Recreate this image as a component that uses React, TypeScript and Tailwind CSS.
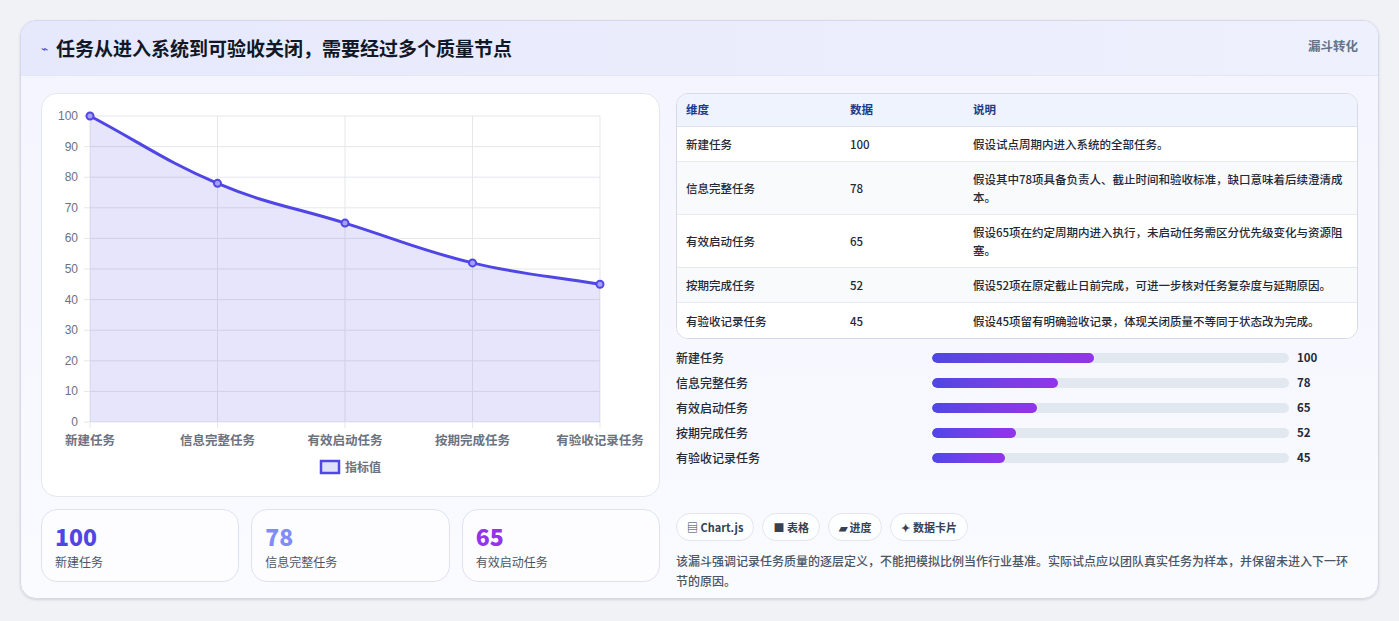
const data = [
  { name: "新建任务", v: 100, desc: "假设试点周期内进入系统的全部任务。" },
  { name: "信息完整任务", v: 78, desc: "假设其中78项具备负责人、截止时间和验收标准，缺口意味着后续澄清成本。" },
  { name: "有效启动任务", v: 65, desc: "假设65项在约定周期内进入执行，未启动任务需区分优先级变化与资源阻塞。" },
  { name: "按期完成任务", v: 52, desc: "假设52项在原定截止日前完成，可进一步核对任务复杂度与延期原因。" },
  { name: "有验收记录任务", v: 45, desc: "假设45项留有明确验收记录，体现关闭质量不等同于状态改为完成。" },
];

function Chart() {
  const L = 48, R = 558, T = 22, B = 328;
  const xs = data.map((_, i) => L + ((R - L) / 4) * i);
  const y = (v: number) => B - ((B - T) * v) / 100;
  const pts = data.map((d, i) => [xs[i], y(d.v)] as const);
  let line = `M${pts[0][0]},${pts[0][1]}`;
  for (let i = 1; i < pts.length; i++) {
    const [x0, y0] = pts[i - 1];
    const [x1, y1] = pts[i];
    const dx = (x1 - x0) * 0.4;
    const s0 = i > 1 ? (y1 - pts[i - 2][1]) / 2 * 0.4 : (y1 - y0) * 0.4;
    const s1 = i < pts.length - 1 ? (pts[i + 1][1] - y0) / 2 * 0.4 : (y1 - y0) * 0.4;
    line += ` C${x0 + dx},${y0 + s0} ${x1 - dx},${y1 - s1} ${x1},${y1}`;
  }
  const area = `${line} L${R},${B} L${L},${B} Z`;
  return (
    <svg width="619" height="403" className="block" style={{ fontFamily: "'Liberation Sans','Noto Sans CJK SC',sans-serif" }}>
      {Array.from({ length: 11 }, (_, i) => (
        <g key={i}>
          <line x1={L - 6} x2={R} y1={y(i * 10)} y2={y(i * 10)} stroke="#e5e7eb" />
          <text x={L - 12} y={y(i * 10) + 4} textAnchor="end" fontSize="12" fill="#6b7280">{i * 10}</text>
        </g>
      ))}
      {xs.map((x, i) => (
        <g key={i}>
          <line x1={x} x2={x} y1={T} y2={B + 6} stroke="#e5e7eb" />
          <text x={x} y={B + 23} textAnchor="middle" fontSize="12.5" fill="#6b7280" fontWeight="600">{data[i].name}</text>
        </g>
      ))}
      <path d={area} fill="#4f46e5" fillOpacity="0.14" />
      <path d={line} fill="none" stroke="#4f46e5" strokeWidth="3" />
      {pts.map(([px, py], i) => (
        <circle key={i} cx={px} cy={py} r="3.5" fill="#a5a1f0" stroke="#4f46e5" strokeWidth="2" />
      ))}
      <rect x="279" y="367" width="18" height="12" fill="#e0e0fa" stroke="#4f46e5" strokeWidth="2.5" />
      <text x="303" y="378" fontSize="12" fill="#6b7280" fontWeight="600">指标值</text>
    </svg>
  );
}

export default function App() {
  const stats = [
    { v: 100, c: "text-[#4f46e5]", n: "新建任务" },
    { v: 78, c: "text-[#818cf8]", n: "信息完整任务" },
    { v: 65, c: "text-[#9333ea]", n: "有效启动任务" },
  ];
  return (
    <div className="w-[1399px] h-[621px] bg-[#f1f2f5] pt-5 px-5" style={{ fontFamily: "'Noto Sans CJK SC','Noto Sans',sans-serif" }}>
      <div className="h-[579px] rounded-2xl border border-[#d4d8ea] bg-gradient-to-b from-[#f3f4fe] to-[#fafbff] overflow-hidden shadow-sm">
        <div className="h-[55px] bg-gradient-to-r from-[#e6e9fc] to-[#eff0fd] border-b border-[#e3e6f5] flex items-center justify-between px-5">
          <div className="flex items-center gap-2">
            <span className="text-[#4f46e5] text-xs">⌁</span>
            <span className="text-[19px] font-bold text-[#111827]">任务从进入系统到可验收关闭，需要经过多个质量节点</span>
          </div>
          <span className="text-[12.5px] font-semibold text-[#64748b] self-start mt-4">漏斗转化</span>
        </div>
        <div className="flex gap-4 px-5 pt-[17px]">
          <div className="w-[619px] flex flex-col gap-3">
            <div className="h-[404px] bg-white rounded-2xl border border-[#e5e7f0]">
              <Chart />
            </div>
            <div className="grid grid-cols-3 gap-3">
              {stats.map((s) => (
                <div key={s.n} className="h-[73px] rounded-2xl border border-[#dde3f3] bg-white/60 px-[13px] pt-[11px]">
                  <div className={`text-[23px] font-extrabold leading-[30px] ${s.c}`}>{s.v}</div>
                  <div className="text-[12px] text-[#4b5563] mt-[2px]">{s.n}</div>
                </div>
              ))}
            </div>
          </div>
          <div className="flex-1 flex flex-col">
            <div className="rounded-xl border border-[#d5dae6] overflow-hidden bg-white text-[11.5px] text-[#1f2937]">
              <div className="grid grid-cols-[164px_123px_1fr] h-[33px] items-center bg-[#eef3fd] font-semibold text-[#1e3a8a] px-[9px] border-b border-[#dde3ee]">
                <span>维度</span><span>数据</span><span>说明</span>
              </div>
              {data.map((d, i) => (
                <div key={d.name} className={`grid grid-cols-[164px_123px_1fr] items-center px-[9px] py-[7px] leading-[18px] border-b border-[#e5e9f0] last:border-b-0 ${i % 2 ? "bg-[#f8fafc]" : "bg-white"} ${d.desc.length > 33 ? "h-[53px]" : "h-[35px]"}`}>
                  <span className="font-medium">{d.name}</span>
                  <span className="font-medium">{d.v}</span>
                  <span className="font-medium">{d.desc}</span>
                </div>
              ))}
            </div>
            <div className="flex flex-col gap-[7px] mt-[10px]">
              {data.map((d) => (
                <div key={d.name} className="flex items-center h-[18px] text-[12px] font-medium text-[#1f2937]">
                  <span className="w-[256px]">{d.name}</span>
                  <div className="w-[357px] h-[10px] rounded-full bg-[#e2e8f0] overflow-hidden">
                    <div className="h-full rounded-full bg-gradient-to-r from-[#4f46e5] to-[#9333ea]" style={{ width: `${(d.v / 100) * 45.4}%` }} />
                  </div>
                  <span className="ml-2 text-[11.5px] font-bold">{d.v}</span>
                </div>
              ))}
            </div>
            <div className="flex gap-2 mt-[46px]">
              {["▤ Chart.js", "■ 表格", "▰ 进度", "✦ 数据卡片"].map((t) => (
                <span key={t} className="h-[28px] px-[10px] rounded-full border border-[#e2e6ef] bg-white/70 text-[11px] font-bold text-[#374151] flex items-center">{t}</span>
              ))}
            </div>
            <p className="mt-[10px] text-[12px] leading-[20px] text-[#4b5563] font-medium pr-2">
              该漏斗强调记录任务质量的逐层定义，不能把模拟比例当作行业基准。实际试点应以团队真实任务为样本，并保留未进入下一环节的原因。
            </p>
          </div>
        </div>
      </div>
    </div>
  );
}
